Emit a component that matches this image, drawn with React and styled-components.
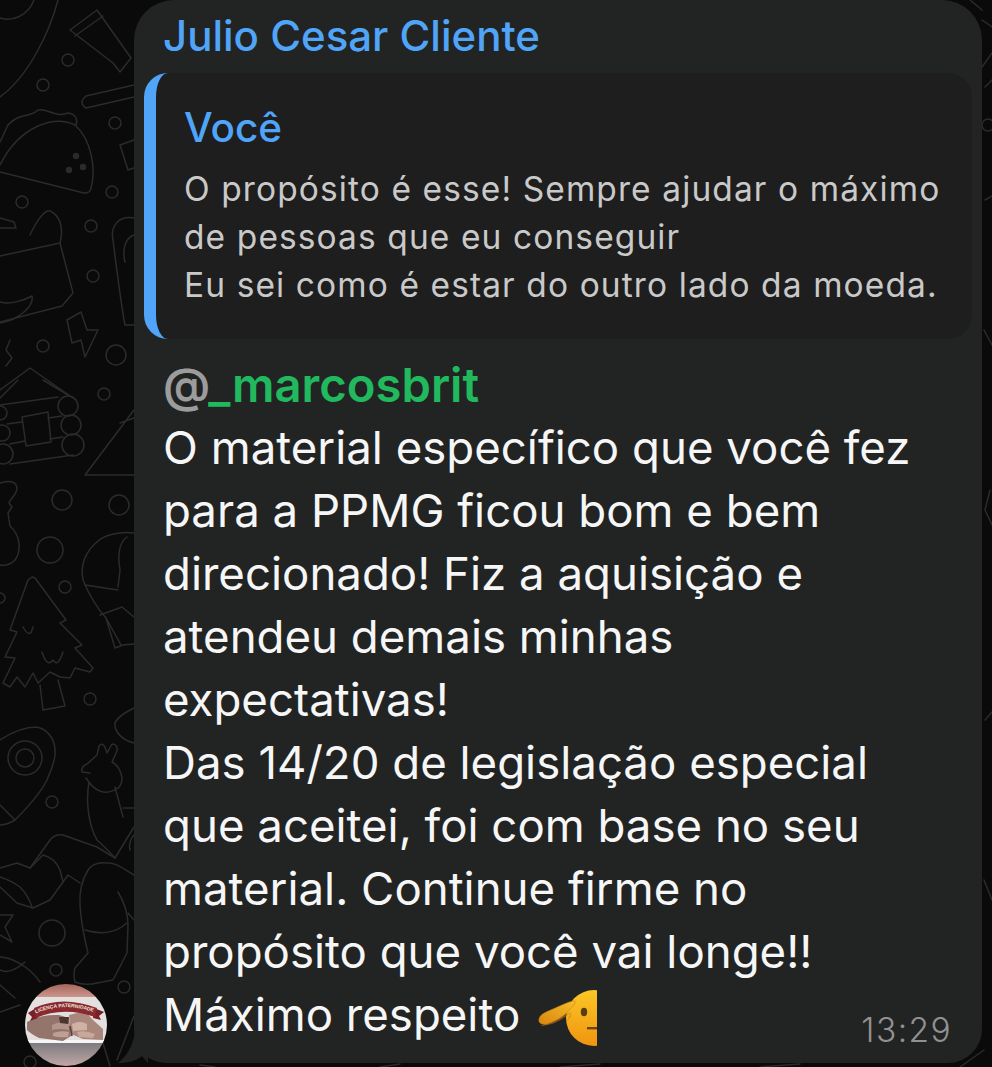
import React from "react";
import styled, { createGlobalStyle } from "styled-components";

const Global = createGlobalStyle`
  html, body { margin: 0; padding: 0; background: #0a0a0a; }
  body { font-family: "Inter", "Liberation Sans", sans-serif; }
`;

const Page = styled.div`
  position: relative;
  width: 992px;
  height: 1067px;
  overflow: hidden;
  background: #0a0a0a;
  display: flex;
  align-items: flex-end;
  gap: 27px;
  padding: 0 10px 4px 25px;
  box-sizing: border-box;
`;

const Wallpaper = styled.svg`
  position: absolute;
  inset: 0;
  width: 992px;
  height: 1067px;
  fill: none;
  stroke: #2b2b2b;
  stroke-width: 1.5;
  stroke-linecap: round;
  stroke-linejoin: round;
`;

const AvatarFrame = styled.svg`
  position: relative;
  flex: none;
  width: 82px;
  height: 82px;
  margin-bottom: -3px;
  border-radius: 50%;
`;

const Bubble = styled.div`
  position: relative;
  flex: none;
  width: 848px;
  box-sizing: border-box;
  padding: 9px 10px 17px 10px;
  background: #222424;
  border-radius: 40px 40px 34px 32px;
`;

const Tail = styled.svg`
  position: absolute;
  left: -16px;
  bottom: 0;
  width: 30px;
  height: 34px;
  fill: #222424;
`;

const Sender = styled.div`
  padding-left: 19px;
  font-size: 42px;
  line-height: 54px;
  font-weight: 500;
  color: #50a5f8;
`;

const Reply = styled.div`
  margin-top: 10px;
  height: 266px;
  box-sizing: border-box;
  padding: 28px 20px 0 28px;
  background: #1e1e1e;
  border-left: 12px solid #50a5f8;
  border-radius: 24px;
`;

const ReplyName = styled.div`
  font-size: 40.5px;
  line-height: 54px;
  font-weight: 500;
  color: #50a5f8;
  margin-bottom: 10px;
`;

const ReplyLine = styled.div`
  font-size: 33.5px;
  line-height: 48px;
  letter-spacing: 1.1px;
  color: #c9c9c9;
  white-space: nowrap;
`;

const Body = styled.div`
  margin-top: 14px;
  padding-left: 19px;
  font-size: 45.6px;
  line-height: 63px;
  color: #f6f6f6;
`;

const BodyLine = styled.div`
  white-space: nowrap;
`;

const Mention = styled.div`
  font-size: 47.2px;
  font-weight: 600;
  color: #21b85e;
  line-height: 63px;
  white-space: nowrap;
`;

const At = styled.span`
  color: #9c9c9c;
`;

const LastRow = styled.div`
  display: flex;
  justify-content: space-between;
  align-items: flex-end;
`;

const Emoji = styled.svg`
  display: inline-block;
  width: 59px;
  height: 56px;
  margin-left: 18px;
  vertical-align: -15px;
`;

const Time = styled.span`
  font-size: 33.5px;
  line-height: 36px;
  font-weight: 300;
  letter-spacing: 1.4px;
  color: #919191;
  margin-right: 20px;
  margin-bottom: -2px;
`;

const Doodles = () => (
  <Wallpaper viewBox="0 0 992 1067">
    <path d="M0 18C12 22 28 16 34 0" />
    <path d="M58 0C50 30 30 75 0 97" />
    <path d="M70 30L97 10L131 58L120 72L113 63Z" />
    <path d="M75 36L103 16" />
    <circle cx="68" cy="60" r="6" />
    <circle cx="43" cy="85" r="6" />
    <circle cx="115" cy="123" r="6" />
    <circle cx="112" cy="192" r="6" />
    <circle cx="22" cy="202" r="6" />
    <circle cx="91" cy="226" r="6" />
    <circle cx="93" cy="276" r="6" />
    <circle cx="43" cy="346" r="6" />
    <circle cx="116" cy="355" r="10" />
    <path d="M134 85L86 96Q78 103 86 108L134 97" />
    <path d="M0 172L80 192Q90 195 91 188C96 170 92 140 75 125C55 115 20 125 0 165" />
    <path d="M8 125C20 112 30 118 38 110C48 108 55 118 68 113C76 114 78 120 76 125" />
    <path d="M0 142L8 125" />
    <circle cx="76" cy="156" r="2.5" fill="#2b2b2b" />
    <circle cx="69" cy="170" r="2.5" fill="#2b2b2b" />
    <circle cx="83" cy="167" r="2.5" fill="#2b2b2b" />
    <path d="M134 140L120 145L128 170L134 168" />
    <path d="M0 256L60 243L73 293L62 306L0 322" />
    <path d="M30 235C36 222 46 206 52 212C62 218 63 232 60 243" />
    <path d="M0 218L14 222L16 228L0 228" />
    <path d="M0 302C10 305 25 300 32 296C34 305 20 320 0 323" />
    <path d="M134 218C120 215 110 225 113 240C118 280 122 310 125 325L134 325" />
    <path d="M134 235C125 238 122 250 125 262" />
    <path d="M67 320L81 312L87 330L98 330L85 357L81 340L72 343Z" />
    <path d="M10 340L6 350L12 358L6 366" />
    <path d="M0 390L30 368L76 400" />
    <path d="M0 398L18 380M43 380L68 395" />
    <path d="M0 405L58 397" />
    <circle cx="68" cy="406" r="10" />
    <circle cx="71" cy="425" r="10" />
    <circle cx="73" cy="445" r="11" />
    <circle cx="0" cy="413" r="7" />
    <circle cx="2" cy="433" r="8" />
    <circle cx="3" cy="454" r="10" />
    <path d="M22 417L48 412L51 442L26 446Z" />
    <path d="M7 424L22 422M48 418L62 416M10 444L25 441M50 439L63 437M10 464L73 455" />
    <circle cx="104" cy="394" r="6" />
    <path d="M134 410L85 475L134 475M120 423L134 418" />
    <circle cx="62" cy="500" r="10" />
    <circle cx="50" cy="550" r="13" />
    <circle cx="119" cy="505" r="10" />
    <path d="M0 483C8 481 16 480 17 488C17 495 9 500 9 503L12 507L8 513L10 526C20 535 22 550 15 560C10 565 5 566 0 565" />
    <path d="M134 533C120 531 105 535 98 541C85 552 80 565 83 580C90 597 97 608 106 618" />
    <path d="M127 537C120 542 117 552 120 570L118 587" />
    <path d="M85 585L118 590M100 615L122 607L134 617" />
    <path d="M106 618L115 648L123 645L134 644M106 618L121 645" />
    <path d="M32 577L28 580L10 630L17 632L5 657L15 658L3 683L10 687L17 677L25 687L33 673L38 683L50 672L60 677L70 678L75 668L90 672L93 668L75 648L82 645L60 623L66 620L35 578Z" />
    <path d="M40 685L43 710L65 706L58 680" />
    <path d="M23 627Q30 640 33 627M42 652Q47 668 53 660Q58 668 63 652" />
    <circle cx="65" cy="587" r="6" />
    <circle cx="90" cy="699" r="6" />
    <circle cx="0" cy="598" r="5" />
    <path d="M134 708C122 714 113 720 115 727C118 737 126 741 134 743" />
    <path d="M0 740C12 732 25 727 37 727C50 730 56 742 55 755C54 765 50 772 47 780C42 790 30 805 15 820C10 823 5 825 0 825" />
    <path d="M0 805L15 820" />
    <circle cx="25" cy="758" r="17" />
    <circle cx="25" cy="758" r="9" />
    <path d="M90 773L82 772Q81 766 87 764L97 755L99 746Q102 742 105 747L107 753L112 744Q118 744 117 751L112 762Q120 766 122 778Q122 785 118 788" />
    <path d="M86 778Q100 800 118 788M89 782C85 805 90 828 97 840Q105 847 115 858M115 787L123 817M123 808L134 808" />
    <circle cx="52" cy="802" r="6" />
    <path d="M115 858L97 847L63 835Q55 834 50 840L30 868L17 863L0 868" />
    <path d="M115 858L134 827" />
    <path d="M30 868L43 855Q55 858 60 870L63 882L50 900L33 908L17 903L0 887" />
    <path d="M0 877Q12 881 20 887Q28 895 32 907" />
    <path d="M63 882L68 875L80 883" />
    <path d="M134 875C122 868 115 862 107 863C98 862 92 864 88 870C82 880 79 890 80 905C81 925 85 940 88 953L75 968Q73 975 75 982Q85 986 97 983" />
    <path d="M118 892C124 902 128 915 128 925L127 953L113 980L97 983" />
    <path d="M85 930Q110 938 127 923M128 913L134 920" />
    <path d="M134 835Q128 842 130 850" />
    <circle cx="52" cy="933" r="13" />
    <circle cx="56" cy="970" r="6" />
    <path d="M0 915L13 915L5 927L12 942L0 935" />
    <path d="M0 957C10 957 28 965 40 982M0 970Q10 975 25 962" />
    <circle cx="124" cy="987" r="6" />
    <path d="M134 1016L117 1060" />
    <circle cx="30" cy="1062" r="6" />
    <path d="M110 1066L102 1040" />
    <path d="M0 985L15 998M0 1012L20 1005" />
    <path d="M982 20L992 27M982 67L992 53M985 87L992 80M970 0L982 10" />
    <circle cx="988" cy="125" r="6" />
    <path d="M985 200L992 196M984 330L992 345M990 490L985 510L992 525M985 720L992 712M984 880L992 900" />
    <path d="M200 1065L215 1067M380 1067L400 1064M560 1067L600 1064M760 1067L800 1064M960 1067L984 1050" />
  </Wallpaper>
);

const Avatar = () => (
  <AvatarFrame viewBox="0 0 82 82">
    <defs>
      <linearGradient id="sky" x1="0" y1="0" x2="0" y2="1">
        <stop offset="0" stopColor="#a5665c" />
        <stop offset="1" stopColor="#cb968c" />
      </linearGradient>
      <linearGradient id="floor" x1="0" y1="0" x2="0" y2="1">
        <stop offset="0" stopColor="#7d7a80" />
        <stop offset="1" stopColor="#c1a7a5" />
      </linearGradient>
      <filter id="soft" x="-10%" y="-10%" width="120%" height="120%"><feGaussianBlur stdDeviation="0.6" /></filter>
      <path id="bannerArc" d="M8 30.5Q39 16 74 30" />
    </defs>
    <rect width="82" height="13" fill="url(#sky)" />
    <rect y="13" width="82" height="44" fill="#e4e0df" />
    <rect y="56" width="82" height="3" fill="#f7f5f5" />
    <rect y="59" width="82" height="23" fill="url(#floor)" />
    <g filter="url(#soft)">
      <path d="M2 38Q16 30 34 31L44 34L46 52L38 57L14 54Q6 50 2 46Z" fill="#94756c" />
      <path d="M44 31L60 27L68 36L78 45L78 56L58 55L46 50Z" fill="#a9877b" />
      <path d="M27 41Q36 36 44 40L44 46Q34 44 27 46Z" fill="#b4958a" />
      <path d="M28 49Q36 46 44 48L43 53Q34 54 28 52Z" fill="#bd9f94" />
      <path d="M47 40Q55 36 62 40L62 46L48 47Z" fill="#d0b2a5" />
      <path d="M52 48Q60 46 70 50L68 54L54 53Z" fill="#c8a89b" />
      <path d="M34 33L44 33L43 40L35 39Z" fill="#4e3533" />
      <path d="M45 42L47 52" stroke="#5a403c" strokeWidth="1.6" />
    </g>
    <path d="M3 29L11 24L13 34L5 37L7 33ZM79 28L69 24L68 34L76 36L74 32Z" fill="#77202a" />
    <path d="M9 24Q38 11 72 24L70 33Q38 22 11 34Z" fill="#8a2a30" />
    <text fontFamily="Liberation Sans, sans-serif" fontSize="5" fontWeight="700" fill="#efe4de">
      <textPath href="#bannerArc" startOffset="3">LICENÇA PATERNIDADE</textPath>
    </text>
  </AvatarFrame>
);

const Salute = () => (
  <Emoji viewBox="0 0 59 56">
    <defs>
      <linearGradient id="face" x1="0" y1="0" x2="0" y2="1">
        <stop offset="0" stopColor="#fbc826" />
        <stop offset="1" stopColor="#f09410" />
      </linearGradient>
      <linearGradient id="arm" x1="0" y1="1" x2="1" y2="0">
        <stop offset="0" stopColor="#d98510" />
        <stop offset="1" stopColor="#f7bd28" />
      </linearGradient>
      <clipPath id="half"><rect width="59" height="56" /></clipPath>
    </defs>
    <g clipPath="url(#half)">
      <circle cx="56" cy="28" r="28" fill="url(#face)" />
      <path d="M2 36C12 36 24 31 33 22C34 26 31 29 29 31L33 22Z" fill="#c77a10" opacity="0.55" />
      <path d="M1 29C2 24 8 22 15 19C22 16 31 11 37 11C38 14 35 16 32 19C27 26 18 31 9 34C4 35 0 33 1 29Z" fill="url(#arm)" stroke="#c97d10" strokeWidth="0.5" />
      <ellipse cx="46" cy="22" rx="3.2" ry="4.2" fill="#5a3d12" />
      <rect x="49" y="37" width="10" height="2.4" fill="#6b4512" />
    </g>
  </Emoji>
);

export default function App() {
  return (
    <>
      <Global />
      <Page>
        <Doodles />
        <Avatar />
        <Bubble>
          <Tail viewBox="0 0 30 34">
            <path d="M18 0L16 8C14 18 8 28 0 34C10 34 18 32 24 27L30 34V0Z" />
          </Tail>
          <Sender>Julio Cesar Cliente</Sender>
          <Reply>
            <ReplyName>Você</ReplyName>
            <ReplyLine>O propósito é esse! Sempre ajudar o máximo</ReplyLine>
            <ReplyLine>de pessoas que eu conseguir</ReplyLine>
            <ReplyLine>Eu sei como é estar do outro lado da moeda.</ReplyLine>
          </Reply>
          <Body>
            <Mention><At>@</At>_marcosbrit</Mention>
            <BodyLine>O material específico que você fez</BodyLine>
            <BodyLine>para a PPMG ficou bom e bem</BodyLine>
            <BodyLine>direcionado! Fiz a aquisição e</BodyLine>
            <BodyLine>atendeu demais minhas</BodyLine>
            <BodyLine>expectativas!</BodyLine>
            <BodyLine>Das 14/20 de legislação especial</BodyLine>
            <BodyLine>que aceitei, foi com base no seu</BodyLine>
            <BodyLine>material. Continue firme no</BodyLine>
            <BodyLine>propósito que você vai longe!!</BodyLine>
            <LastRow>
              <BodyLine>Máximo respeito<Salute /></BodyLine>
              <Time>13:29</Time>
            </LastRow>
          </Body>
        </Bubble>
      </Page>
    </>
  );
}
